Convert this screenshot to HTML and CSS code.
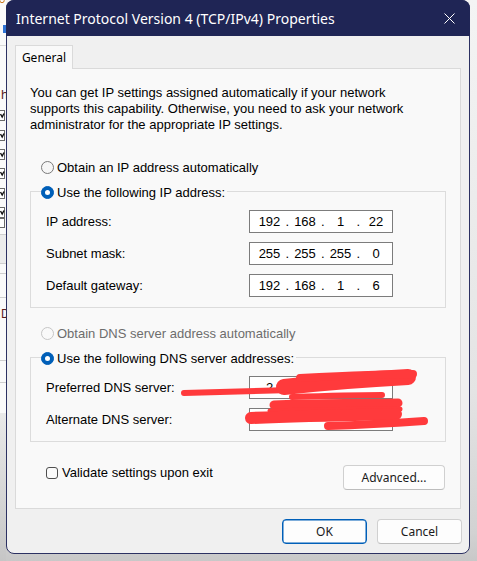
FILE: index.html
```html
<!DOCTYPE html>
<html>
<head>
<meta charset="utf-8">
<link rel="stylesheet" href="styles.css">
</head>
<body>
<div class="screen">
  <svg class="bg-left" width="6" height="561" viewBox="0 0 6 561">
    <defs>
      <linearGradient id="lg" x1="0" y1="0" x2="0" y2="1">
        <stop offset="0" stop-color="#e9e9e9"/>
        <stop offset="1" stop-color="#c6c6c6"/>
      </linearGradient>
    </defs>
    <rect x="0" y="0" width="6" height="413" fill="#fafafa"/>
    <rect x="0" y="413" width="6" height="148" fill="url(#lg)"/>
    <circle cx="2" cy="0.5" r="2.2" fill="none" stroke="#c9781c" stroke-width="1"/>
    <rect x="3" y="25" width="3" height="8" fill="#2f73d4"/>
    <line x1="0" y1="45.5" x2="6" y2="45.5" stroke="#dadada"/>
    <text x="1" y="99" font-family="Liberation Sans" font-size="13" fill="#5b1d1d">h</text>
    <g fill="#fff" stroke="#6a6a6a" stroke-width="1">
      <rect x="-2.5" y="110.5" width="7" height="10"/>
      <rect x="-2.5" y="130.5" width="7" height="10"/>
      <rect x="-2.5" y="149.5" width="7" height="10"/>
      <rect x="-2.5" y="168.5" width="7" height="10"/>
      <rect x="-2.5" y="188.5" width="7" height="10"/>
      <rect x="-2.5" y="207.5" width="7" height="10"/>
      <rect x="-2.5" y="218.5" width="7" height="9"/>
    </g>
    <g fill="none" stroke="#111" stroke-width="1.4">
      <path d="M0.5 114 L2.2 117 L4 113.5"/>
      <path d="M0.5 134 L2.2 137 L4 133.5"/>
      <path d="M0.5 153 L2.2 156 L4 152.5"/>
      <path d="M0.5 172 L2.2 175 L4 171.5"/>
      <path d="M0.5 192 L2.2 195 L4 191.5"/>
      <path d="M0.5 211 L2.2 214 L4 210.5"/>
    </g>
    <rect x="0" y="235" width="6" height="28" fill="#ececec"/>
    <g stroke="#cfcfcf" stroke-width="1">
      <line x1="0" y1="234.5" x2="6" y2="234.5"/>
      <line x1="0" y1="263.5" x2="6" y2="263.5"/>
      <line x1="0" y1="273.5" x2="6" y2="273.5"/>
      <line x1="0" y1="297.5" x2="6" y2="297.5"/>
      <line x1="0" y1="360.5" x2="6" y2="360.5"/>
      <line x1="0" y1="382.5" x2="6" y2="382.5"/>
    </g>
    <text x="1" y="318" font-family="Liberation Sans" font-size="12" fill="#5b1d1d">D</text>
  </svg>

  <div class="window">
    <header class="window-head">
      <span class="window-title">Internet Protocol Version 4 (TCP/IPv4) Properties</span>
      <svg class="close" width="11" height="11" viewBox="0 0 11 11">
        <path d="M0.5 0.5 L10.5 10.5 M10.5 0.5 L0.5 10.5" stroke="#ffffff" stroke-width="1" fill="none"/>
      </svg>
    </header>
    <div class="client">
      <div class="tabs"><div class="tab">General</div></div>
      <div class="panel">
        <p class="intro">You can get IP settings assigned automatically if your network<br>supports this capability. Otherwise, you need to ask your network<br>administrator for the appropriate IP settings.</p>

        <div class="opt first"><span class="radio"></span><span>Obtain an IP address automatically</span></div>

        <fieldset class="group">
          <legend><span class="opt-inline"><span class="radio on"></span><span>Use the following IP address:</span></span></legend>
          <div class="row"><span class="label">IP address:</span>
            <div class="ipbox"><span class="oct">192</span><span class="dot">.</span><span class="oct">168</span><span class="dot">.</span><span class="oct">1</span><span class="dot">.</span><span class="oct">22</span></div>
          </div>
          <div class="row"><span class="label">Subnet mask:</span>
            <div class="ipbox"><span class="oct">255</span><span class="dot">.</span><span class="oct">255</span><span class="dot">.</span><span class="oct">255</span><span class="dot">.</span><span class="oct">0</span></div>
          </div>
          <div class="row"><span class="label">Default gateway:</span>
            <div class="ipbox"><span class="oct">192</span><span class="dot">.</span><span class="oct">168</span><span class="dot">.</span><span class="oct">1</span><span class="dot">.</span><span class="oct">6</span></div>
          </div>
        </fieldset>

        <div class="opt dns disabled"><span class="radio"></span><span>Obtain DNS server address automatically</span></div>

        <fieldset class="group">
          <legend><span class="opt-inline"><span class="radio on"></span><span>Use the following DNS server addresses:</span></span></legend>
          <div class="row"><span class="label">Preferred DNS server:</span>
            <div class="ipbox"><span class="oct">2</span><span class="dot">.</span><span class="oct"></span><span class="dot"></span><span class="oct"></span><span class="dot"></span><span class="oct"></span></div>
          </div>
          <div class="row"><span class="label">Alternate DNS server:</span>
            <div class="ipbox"><span class="oct"></span><span class="dot"></span><span class="oct"></span><span class="dot"></span><span class="oct"></span><span class="dot"></span><span class="oct"></span></div>
          </div>
        </fieldset>

        <div class="footer">
          <div class="check-row"><span class="check"></span><span>Validate settings upon exit</span></div>
          <button class="btn advanced">Advanced...</button>
        </div>
      </div>
      <div class="actions">
        <button class="btn default">OK</button>
        <button class="btn">Cancel</button>
      </div>
    </div>
  </div>

  <svg class="scribble" width="477" height="561" viewBox="0 0 477 561">
    <g fill="none" stroke="#ff3a3c" stroke-linecap="round" stroke-linejoin="round">
      <path d="M184 393 C 220 392, 255 391, 292 390" stroke-width="6"/>
      <path d="M284 387 C 320 383, 370 379, 408 377" stroke-width="16"/>
      <path d="M300 378 C 340 376, 380 374, 413 374" stroke-width="8"/>
      <path d="M292 397 C 320 396, 350 395, 382 395" stroke-width="6"/>
      <path d="M274 405 C 310 403, 350 404, 398 403" stroke-width="9"/>
      <path d="M270 411 C 310 410, 360 409, 400 409" stroke-width="5"/>
      <path d="M251 418 C 300 416, 350 415, 396 414" stroke-width="12"/>
      <path d="M328 426 C 360 425, 395 423, 424 421" stroke-width="8"/>
    </g>
  </svg>
</div>
</body>
</html>
```

FILE: styles.css
```css
html, body {
  margin: 0;
  padding: 0;
}

body {
  width: 477px;
  height: 561px;
  overflow: hidden;
  font-family: "Liberation Sans", Arial, sans-serif;
  font-size: 13px;
  color: #000;
}

.screen {
  position: relative;
  display: flex;
  align-items: flex-start;
  width: 477px;
  height: 561px;
  background: linear-gradient(to bottom, #f4f4f4 0%, #e4e4e4 70%, #d2d2d2 95%, #c8c8c8 100%);
}

.bg-left {
  display: block;
  flex: none;
}

.window {
  flex: none;
  width: 464px;
  height: 554px;
  box-sizing: border-box;
  border: 1px solid #2c3162;
  border-radius: 8px;
  background: #f0f0f0;
}

.window-head {
  display: flex;
  align-items: center;
  height: 35px;
  box-sizing: border-box;
  margin: -1px -1px 0 -1px;
  padding: 0 15px 0 10px;
  border-radius: 8px 8px 0 0;
  background: #1f2555;
  color: #fff;
  font-family: "Noto Sans", "Open Sans", sans-serif;
  font-size: 14px;
  height: 36px;
}

.window-title {
  flex: 1;
  white-space: nowrap;
  color: #fff;
}

.close {
  display: block;
  flex: none;
}

.client {
  display: flex;
  flex-direction: column;
  padding: 9px 8px 0 8px;
}

.tabs {
  display: flex;
}

.tab {
  position: relative;
  z-index: 1;
  width: 58px;
  height: 24px;
  box-sizing: border-box;
  margin-bottom: -1px;
  border: 1px solid #dadada;
  border-bottom: none;
  background: #f9f9f9;
  font-family: "Noto Sans", "Open Sans", sans-serif;
  font-size: 12px;
  color: #000;
  display: flex;
  align-items: center;
  justify-content: center;
  padding-bottom: 1px;
}

.panel {
  height: 441px;
  box-sizing: border-box;
  border: 1px solid #dadada;
  background: #f9f9f9;
  padding: 0 14px;
}

.intro {
  margin: 16px 0 0;
  line-height: 16px;
  white-space: nowrap;
}

.opt {
  display: flex;
  align-items: center;
  height: 16px;
  padding-left: 11px;
  gap: 3px;
  white-space: nowrap;
}

.opt.first {
  margin-top: 26px;
}

.opt.dns {
  margin-top: 17px;
}

.opt.disabled {
  color: #6d6d6d;
}

.opt-inline {
  display: inline-flex;
  align-items: center;
  gap: 3px;
  height: 16px;
  white-space: nowrap;
}

.radio {
  flex: none;
  width: 13px;
  height: 13px;
  box-sizing: border-box;
  border-radius: 50%;
  border: 1px solid #7a7a7a;
  background: #f6f6f6;
  display: flex;
  align-items: center;
  justify-content: center;
}

.disabled .radio {
  border-color: #c6c6c6;
  background: #f9f9f9;
}

.radio.on {
  background: #005fb8;
  border-color: #005fb8;
}

.radio.on::after {
  content: "";
  width: 5px;
  height: 5px;
  border-radius: 50%;
  background: #fff;
}

.group {
  margin: 8px 0 0;
  border: 1px solid #dcdcdc;
  padding: 11px 14px 10px 15px;
  min-width: 0;
}

.group legend {
  padding: 0 2px 0 0;
  margin-left: -5px;
  line-height: 16px;
  height: 16px;
}

.row {
  display: flex;
  align-items: center;
  height: 23px;
}

.row + .row {
  margin-top: 9px;
}

.label {
  width: 203px;
  flex: none;
  white-space: nowrap;
}

.ipbox {
  width: 144px;
  height: 23px;
  box-sizing: border-box;
  border: 1px solid #7c7c7c;
  background: #fff;
  display: flex;
  align-items: center;
  padding-left: 5px;
  white-space: nowrap;
}

.oct {
  width: 29px;
  flex: none;
  text-align: center;
}

.dot {
  width: 6.5px;
  flex: none;
  text-align: center;
}

.footer {
  display: flex;
  justify-content: space-between;
  align-items: flex-start;
  margin-top: 23px;
  padding-left: 16px;
}

.check-row {
  display: flex;
  align-items: center;
  gap: 4px;
  line-height: 14px;
  margin-top: 1px;
  white-space: nowrap;
}

.check {
  flex: none;
  width: 12px;
  height: 12px;
  box-sizing: border-box;
  border: 1px solid #4f4f4f;
  border-radius: 3px;
  background: #fbfbfb;
}

.btn {
  height: 25px;
  box-sizing: border-box;
  border: 1px solid #d0d0d0;
  border-bottom-color: #bdbdbd;
  border-radius: 4px;
  background: #fdfdfd;
  font-family: "Noto Sans", "Open Sans", sans-serif;
  font-size: 12px;
  color: #1a1a1a;
  padding: 0;
  margin: 0;
  width: 85px;
}

.btn.advanced {
  width: 102px;
  margin-right: 1px;
}

.btn.default {
  border: 1px solid #005fb8;
  box-shadow: inset 0 0 0 0.5px #005fb8;
}

.actions {
  display: flex;
  justify-content: flex-end;
  gap: 10px;
  margin-top: 10px;
  margin-right: -1px;
}

.scribble {
  position: absolute;
  left: 0;
  top: 0;
  pointer-events: none;
}
```
